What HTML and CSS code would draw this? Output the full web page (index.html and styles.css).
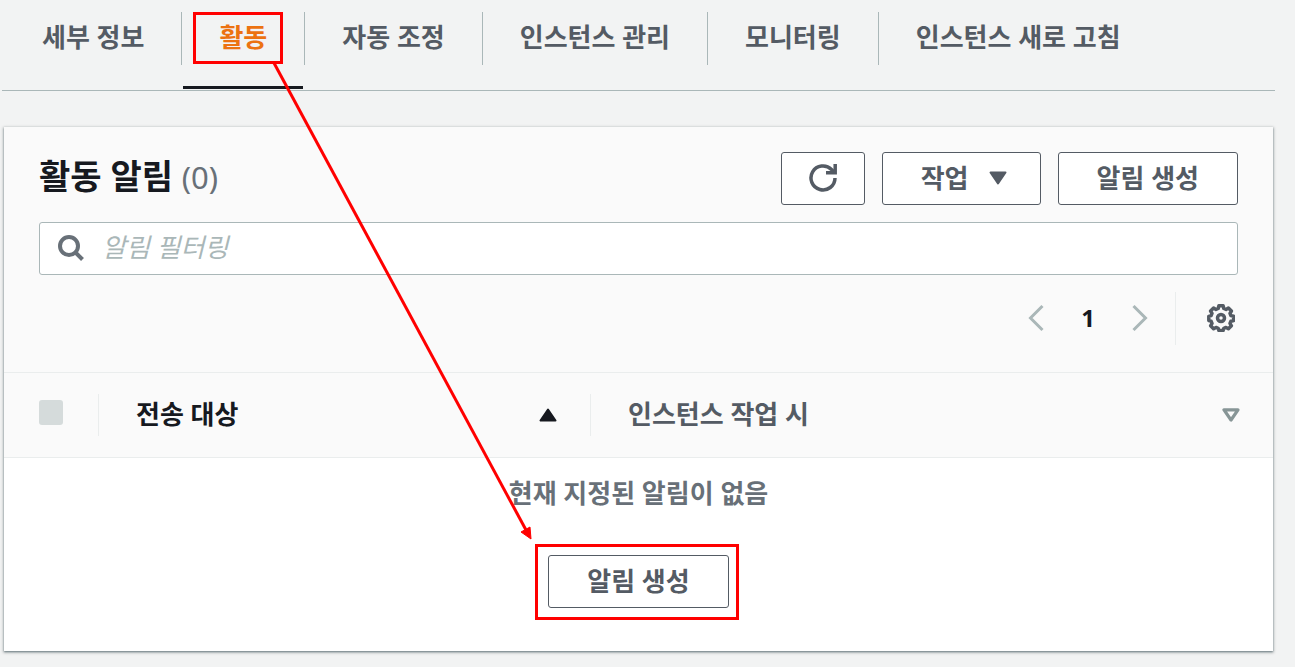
FILE: index.html
```html
<!DOCTYPE html>
<html lang="ko">
<head>
    <meta charset="UTF-8">
    <meta name="viewport" content="width=device-width, initial-scale=1.0">
    <title>활동 알림</title>
    <link rel="stylesheet" href="styles.css">
</head>
<body>
    <div class="page">
        <nav class="tabs">
            <a class="tab" href="#details">세부 정보</a>
            <a class="tab active" href="#activity">활동</a>
            <a class="tab" href="#scaling">자동 조정</a>
            <a class="tab" href="#instances">인스턴스 관리</a>
            <a class="tab" href="#monitoring">모니터링</a>
            <a class="tab" href="#refresh">인스턴스 새로 고침</a>
        </nav>

        <section class="card">
            <div class="card-header">
                <div class="title-row">
                    <h2>활동 알림 <span class="count">(0)</span></h2>
                    <div class="actions">
                        <button type="button" class="btn btn-icon" aria-label="새로 고침">
                            <svg width="30" height="30" viewBox="0 0 30 30" fill="none" stroke="#545b64" stroke-width="3.500">
                                <path d="M27 15A12 12 0 1 1 23.500 6.500L26 9"/>
                                <path d="M27.200 1v8.700H18" />
                            </svg>
                        </button>
                        <button type="button" class="btn btn-menu">작업
                            <svg width="18" height="14" viewBox="0 0 18 14"><path d="M1.500 1.500h15L9 12.500z" fill="#545b64" stroke="#545b64" stroke-width="2" stroke-linejoin="round"/></svg>
                        </button>
                        <button type="button" class="btn">알림 생성</button>
                    </div>
                </div>
                <div class="search">
                    <svg width="26" height="26" viewBox="0 0 26 26" fill="none" stroke="#687078" stroke-width="4">
                        <circle cx="11" cy="11" r="9"/>
                        <path d="M17.500 17.500l7 7"/>
                    </svg>
                    <input type="text" placeholder="알림 필터링" aria-label="알림 필터링">
                </div>
                <div class="pagination">
                    <button type="button" class="page-btn" aria-label="이전">
                        <svg width="16" height="28" viewBox="0 0 16 28" fill="none" stroke="#aab7b8" stroke-width="3"><path d="M14.500 2L2.500 14l12 12"/></svg>
                    </button>
                    <span class="page-number">1</span>
                    <button type="button" class="page-btn" aria-label="다음">
                        <svg width="16" height="28" viewBox="0 0 16 28" fill="none" stroke="#aab7b8" stroke-width="3"><path d="M1.500 2l12 12-12 12"/></svg>
                    </button>
                    <div class="settings">
                        <button type="button" class="page-btn" aria-label="설정">
                            <svg width="28" height="28" viewBox="0 0 28 28" fill="none" stroke="#545b64" stroke-width="3.500" stroke-linejoin="round">
                                <path d="M11.900 1.800h4.200l.7 2.700 2.200.9 2.400-1.400 3 3-1.400 2.400.9 2.200 2.700.7v4.200l-2.700.7-.9 2.200 1.400 2.400-3 3-2.400-1.400-2.200.9-.7 2.300h-4.200l-.7-2.300-2.200-.9-2.400 1.400-3-3L5 19.400l-.9-2.200-2.300-.7v-4.200l2.300-.7L5 9.400 3.600 7l3-3L9 5.400l2.200-.9z"/>
                                <circle cx="14" cy="14" r="3.500"/>
                            </svg>
                        </button>
                    </div>
                </div>
            </div>

            <table>
                <thead>
                    <tr>
                        <th class="col-check"><div class="th-inner"><input type="checkbox" disabled aria-label="모두 선택"></div></th>
                        <th class="col-target">
                            <div class="th-inner">
                                <span>전송 대상</span>
                                <svg width="18" height="14" viewBox="0 0 18 14"><path d="M1.500 12.500h15L9 1.500z" fill="#16191f" stroke="#16191f" stroke-width="2" stroke-linejoin="round"/></svg>
                            </div>
                        </th>
                        <th class="col-event">
                            <div class="th-inner">
                                <span>인스턴스 작업 시</span>
                                <svg width="18" height="14" viewBox="0 0 18 14"><path d="M2 1.800h14L9 12z" fill="none" stroke="#879596" stroke-width="3.200" stroke-linejoin="round"/></svg>
                            </div>
                        </th>
                    </tr>
                </thead>
                <tbody>
                    <tr>
                        <td colspan="3">
                            <p class="empty-text">현재 지정된 알림이 없음</p>
                            <div class="empty-action">
                                <button type="button" class="btn">알림 생성</button>
                            </div>
                        </td>
                    </tr>
                </tbody>
            </table>
        </section>

        <!-- arrow from the active tab to the create button -->
        <svg class="arrow" width="264" height="484" viewBox="0 0 264 484">
            <path d="M4 2L256 469" stroke="#f00" stroke-width="3"/>
            <path d="M261 478l-10-7 9-5z" fill="#f00" stroke="#f00"/>
        </svg>
    </div>
</body>
</html>
```

FILE: styles.css
```css
*,
*::before,
*::after {
    box-sizing: border-box;
}
body {
    margin: 0;
    background-color: #f2f3f3;
    font-family: "Noto Sans", "Noto Sans CJK KR", sans-serif;
    font-size: 26px;
    line-height: 36px;
    color: #545b64;
}
svg {
    display: block;
    flex-shrink: 0;
}
.page {
    position: relative;
    padding: 12px 20px 16px 2px;
}

/* Tabs */
.tabs {
    display: flex;
    height: 79px;
    padding-left: 3px;
    border-bottom: 1px solid #aab7b8;
}
.tab {
    position: relative;
    height: 53px;
    padding: 7px 37px 0;
    border-right: 1px solid #aab7b8;
    color: #545b64;
    font-weight: bold;
    text-decoration: none;
    white-space: nowrap;
}
.tab:last-child {
    border-right: none;
}
.tab.active {
    color: #ec7211;
}
.tab.active::after {
    content: "";
    position: absolute;
    left: 1px;
    right: 1px;
    top: 74px;
    height: 3px;
    background-color: #16191f;
}
.tab.active::before {
    content: "";
    position: absolute;
    left: 11px;
    right: 21px;
    top: 0;
    height: 52px;
    border: 3px solid #f00;
}

/* Card */
.card {
    margin: 36px 2px 0;
    background-color: #fff;
    box-shadow: 0 1px 2px 0 rgba(0, 28, 36, 0.5), 0 1px 3px 1px rgba(0, 28, 36, 0.15);
}
.card-header {
    padding: 25px 35px 27px;
    background-color: #fafafa;
}
.title-row {
    display: flex;
    align-items: flex-start;
    justify-content: space-between;
    margin-bottom: 17px;
}
h2 {
    margin: 0;
    color: #16191f;
    font-size: 34px;
    line-height: 48px;
}
.count {
    color: #687078;
    font-size: 31px;
    font-weight: normal;
}
.actions {
    display: flex;
    gap: 17px;
}
.btn {
    display: flex;
    align-items: center;
    justify-content: center;
    height: 53px;
    padding: 0 38px 2px;
    border: 1px solid #545b64;
    border-radius: 3px;
    background-color: #fff;
    color: #545b64;
    font: inherit;
    font-weight: bold;
    cursor: pointer;
}
.btn-icon {
    padding: 0 26px 2px;
}
.btn-menu {
    gap: 20px;
    padding-right: 33px;
}
.search {
    display: flex;
    align-items: center;
    gap: 18px;
    height: 53px;
    padding: 0 18px 2px;
    border: 1px solid #aab7b8;
    border-radius: 3px;
    background-color: #fff;
}
.search input {
    flex: 1;
    padding: 0 0 2px;
    border: none;
    outline: none;
    background: none;
    font: inherit;
}
.search input::placeholder {
    color: #aab7b8;
    font-style: italic;
    opacity: 1;
}
.pagination {
    display: flex;
    align-items: center;
    justify-content: flex-end;
    height: 53px;
    margin-top: 17px;
}
.page-btn {
    padding: 0 0 2px;
    border: none;
    background: none;
    cursor: pointer;
}
.page-number {
    width: 88px;
    padding-bottom: 2px;
    color: #16191f;
    font-size: 24px;
    font-weight: bold;
    text-align: center;
}
.settings {
    display: flex;
    align-items: center;
    height: 53px;
    margin-left: 27px;
    padding: 0 3px 0 31px;
    border-left: 1px solid #eaeded;
}

/* Table */
table {
    width: 100%;
    border-collapse: collapse;
    table-layout: fixed;
}
th {
    padding: 21px 0;
    border-top: 1px solid #eaeded;
    border-bottom: 1px solid #eaeded;
    background-color: #fafafa;
    text-align: left;
}
.th-inner {
    display: flex;
    align-items: center;
    justify-content: space-between;
    height: 42px;
    padding: 0 33px 0 37px;
    border-right: 1px solid #eaeded;
}
.th-inner span {
    padding-bottom: 2px;
}
.col-check {
    width: 95px;
}
.col-check .th-inner {
    padding: 0 0 6px 35px;
}
.col-target {
    width: 492px;
    color: #16191f;
}
.col-event .th-inner {
    border-right: none;
}
input[type="checkbox"] {
    appearance: none;
    width: 24px;
    height: 25px;
    margin: 0;
    border-radius: 3px;
    background-color: #d5dbdb;
}
td {
    padding: 17px 0 31px;
    text-align: center;
}
.empty-text {
    margin: 0 0 33px;
    color: #687078;
    font-weight: bold;
}
.empty-action {
    display: inline-block;
    margin-right: 3px;
    padding: 8px 7px 9px 10px;
    border: 3px solid #f00;
    vertical-align: top;
}

.arrow {
    position: absolute;
    left: 270px;
    top: 61px;
    pointer-events: none;
}
```
